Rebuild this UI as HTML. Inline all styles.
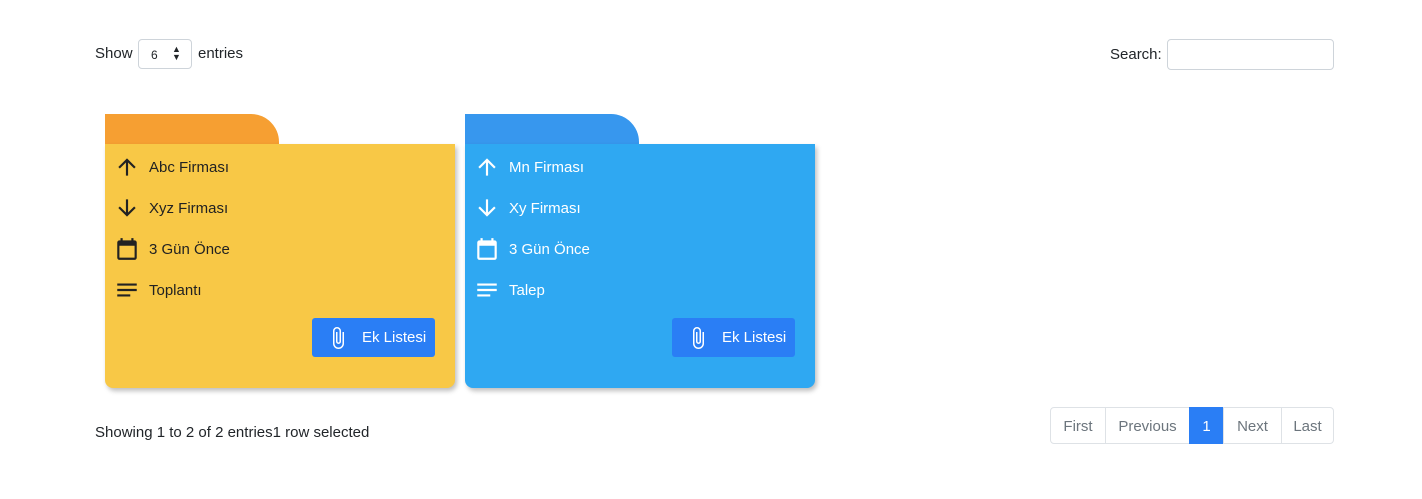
<!DOCTYPE html>
<html><head><style>
body{margin:0;width:1422px;height:499px;background:#fff;font-family:"Liberation Sans",sans-serif;font-size:15px;color:#212529;position:relative;overflow:hidden}
.a{position:absolute}
.card{position:absolute;top:114px;width:350px;height:274px}
.tab{position:absolute;left:0;top:0;width:174px;height:30px;border-top-right-radius:28px}
.body{position:absolute;left:0;top:30px;width:350px;height:244px;border-radius:0 0 8px 8px;box-shadow:2px 3px 5px rgba(0,0,0,.25)}
.row{position:absolute;left:9px;height:24px;display:flex;align-items:center}
.row svg{width:26px;height:26px;margin-right:9px}
.btn{position:absolute;left:207px;top:174px;width:123px;height:39px;background:#2a7ef5;border-radius:3px;color:#fff;display:flex;align-items:center;font-size:15px}
.pg{position:absolute;top:407px;height:37px;border:1px solid #dee2e6;box-sizing:border-box;display:flex;align-items:center;justify-content:center;color:#6c757d;font-size:15px}
</style></head><body>
<div class="a" style="left:95px;top:45px">Show</div>
<div class="a" style="left:138px;top:39px;width:54px;height:30px;border:1px solid #ced4da;border-radius:4px;box-sizing:border-box;font-size:12px"><span class="a" style="left:12px;top:8px">6</span><span class="a" style="left:33px;top:5px;font-size:9px;line-height:8px">▲<br>▼</span></div>
<div class="a" style="left:198px;top:45px">entries</div>
<div class="a" style="left:1110px;top:46px">Search:</div>
<div class="a" style="left:1167px;top:39px;width:167px;height:31px;border:1px solid #ced4da;border-radius:4px;box-sizing:border-box"></div>

<div class="card" style="left:105px">
<div class="tab" style="background:#f69f32"></div>
<div class="body" style="background:#f8c846;color:#222">
<div class="row" style="top:11px"><svg viewBox="0 0 24 24"><path d="M4 12l1.41 1.41L11 7.83V20h2V7.83l5.58 5.59L20 12l-8-8z" fill="#222"/></svg>Abc Firması</div>
<div class="row" style="top:52px"><svg viewBox="0 0 24 24"><path d="M20 12l-1.41-1.41L13 16.17V4h-2v12.17l-5.58-5.59L4 12l8 8z" fill="#222"/></svg>Xyz Firması</div>
<div class="row" style="top:93px"><svg viewBox="0 0 24 24"><path d="M19 4h-1V2h-2v2H8V2H6v2H5a2 2 0 00-2 2v14a2 2 0 002 2h14a2 2 0 002-2V6a2 2 0 00-2-2zm0 16H5V9h14z" fill="#222"/></svg>3 Gün Önce</div>
<div class="row" style="top:134px"><svg viewBox="0 0 24 24"><path d="M3 6h18v2H3zm0 5h18v2H3zm0 5h12v2H3z" fill="#222"/></svg>Toplantı</div>
<div class="btn"><svg viewBox="0 0 24 24" style="width:24px;height:24px;margin:0 12px 0 14px"><path d="M16.5 6v11.5a4 4 0 01-8 0V5a2.5 2.5 0 015 0v10.5a1 1 0 01-2 0V6H10v9.5a2.5 2.5 0 005 0V5a4 4 0 00-8 0v12.5a5.5 5.5 0 0011 0V6z" fill="#fff"/></svg>Ek Listesi</div>
</div></div>

<div class="card" style="left:465px">
<div class="tab" style="background:#3797ee"></div>
<div class="body" style="background:#2fa8f2;color:#fff">
<div class="row" style="top:11px"><svg viewBox="0 0 24 24"><path d="M4 12l1.41 1.41L11 7.83V20h2V7.83l5.58 5.59L20 12l-8-8z" fill="#fff"/></svg>Mn Firması</div>
<div class="row" style="top:52px"><svg viewBox="0 0 24 24"><path d="M20 12l-1.41-1.41L13 16.17V4h-2v12.17l-5.58-5.59L4 12l8 8z" fill="#fff"/></svg>Xy Firması</div>
<div class="row" style="top:93px"><svg viewBox="0 0 24 24"><path d="M19 4h-1V2h-2v2H8V2H6v2H5a2 2 0 00-2 2v14a2 2 0 002 2h14a2 2 0 002-2V6a2 2 0 00-2-2zm0 16H5V9h14z" fill="#fff"/></svg>3 Gün Önce</div>
<div class="row" style="top:134px"><svg viewBox="0 0 24 24"><path d="M3 6h18v2H3zm0 5h18v2H3zm0 5h12v2H3z" fill="#fff"/></svg>Talep</div>
<div class="btn"><svg viewBox="0 0 24 24" style="width:24px;height:24px;margin:0 12px 0 14px"><path d="M16.5 6v11.5a4 4 0 01-8 0V5a2.5 2.5 0 015 0v10.5a1 1 0 01-2 0V6H10v9.5a2.5 2.5 0 005 0V5a4 4 0 00-8 0v12.5a5.5 5.5 0 0011 0V6z" fill="#fff"/></svg>Ek Listesi</div>
</div></div>

<div class="a" style="left:95px;top:424px">Showing 1 to 2 of 2 entries1 row selected</div>
<div class="pg" style="left:1050px;width:56px;border-radius:4px 0 0 4px;padding-top:2px">First</div>
<div class="pg" style="left:1105px;width:85px;padding-top:2px">Previous</div>
<div class="pg" style="left:1189px;width:35px;background:#2a7ef5;border-color:#2a7ef5;color:#fff;padding-top:2px">1</div>
<div class="pg" style="left:1223px;width:59px;padding-top:2px">Next</div>
<div class="pg" style="left:1281px;width:53px;border-radius:0 4px 4px 0;padding-top:2px">Last</div>
</body></html>
